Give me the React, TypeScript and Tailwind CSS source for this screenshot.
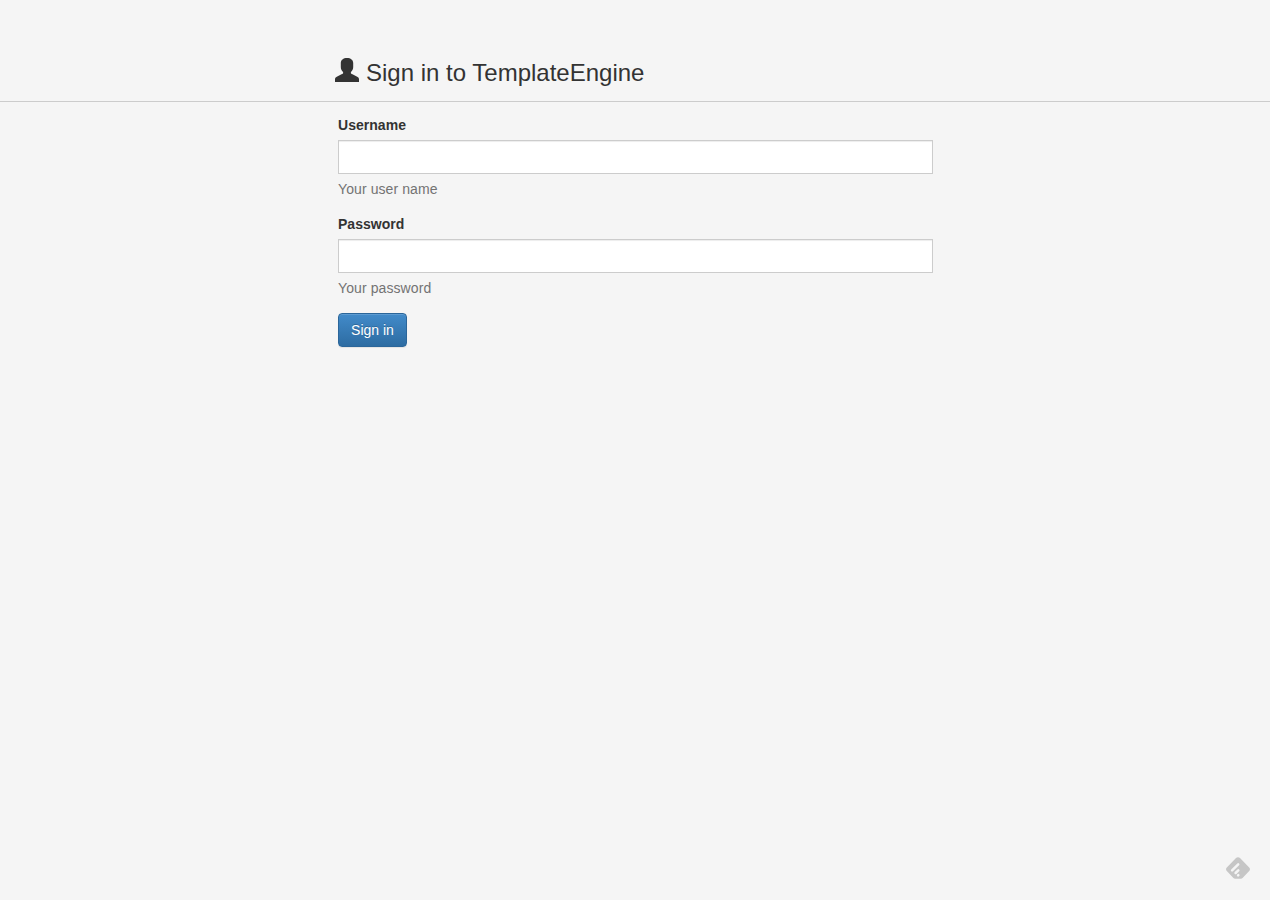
import React from "react";

function UserIcon() {
  return (
    <svg width="24" height="24" viewBox="0 0 24 24" className="mt-[-2px] block shrink-0" fill="currentColor" aria-hidden="true">
      <path d="M12 0C8.300 0 5.800 2 5.800 5v4c0 2 .8 3.800 2.300 5.100v1.100c-.4.500-1 .8-1.600 1.100L1.800 18.800C.6 19.400 0 20.200 0 21.400V24h24v-2.600c0-1.200-.6-2-1.800-2.600l-4.700-2.500c-.6-.3-1.200-.6-1.600-1.100v-1.100c1.500-1.300 2.300-3.100 2.300-5.100V5c0-3-2.500-5-6.200-5z" />
    </svg>
  );
}

function Field({ label, help, type, id }: { label: string; help: string; type: string; id: string }) {
  return (
    <div className="mb-[15px]">
      <label htmlFor={id} className="mb-[5px] block font-bold tracking-[0.03px]">{label}</label>
      <input id={id} type={type} className="block h-[34px] w-full rounded-none border border-[#ccc] bg-white px-3 shadow-[inset_0_1px_1px_rgba(0,0,0,0.075)] outline-none" />
      <p className="mt-[5px] tracking-[0.09px] text-[#737373]">{help}</p>
    </div>
  );
}

export default function App() {
  return (
    <div className="flex h-[900px] flex-col bg-[#f5f5f5] font-['Liberation_Sans',Arial,sans-serif] text-[14px] leading-5 text-[#333]">
      <header className="h-[102px] border-b border-[#ccc] pt-[60px]">
        <div className="ml-[335px] flex">
          <UserIcon />
          <h1 className="ml-[7px] text-[24px] leading-[26px]">Sign in to TemplateEngine</h1>
        </div>
      </header>
      <form className="ml-[338px] w-[595px] pt-[13px]">
        <Field id="username" label="Username" help="Your user name" type="text" />
        <Field id="password" label="Password" help="Your password" type="password" />
        <button type="button" className="h-[34px] w-[69px] rounded-[4px] border border-[#2b669a] bg-linear-to-b from-[#428bca] to-[#2d6ca2] text-white shadow-[inset_0_1px_0_rgba(255,255,255,0.15),0_1px_1px_rgba(0,0,0,0.075)] [text-shadow:0_-1px_0_rgba(0,0,0,0.2)]">Sign in</button>
      </form>
      <footer className="mt-auto mr-5 mb-5 ml-auto">
        <svg width="24" height="23" viewBox="0 0 24 23" className="block" aria-hidden="true">
          <path fill="#c6c6c6" d="M10 1.100.8 10.500c-1 1-1 2.400 0 3.400l6.400 6.900c.6.600 1.200.9 2 .9h5.600c.8 0 1.400-.3 2-.9l6.400-6.900c1-1 1-2.400 0-3.400L14 1.100c-1.200-1.100-2.800-1.100-4 0z" />
          <path d="m6.100 13.400 6.100-6.100M9.600 16l2.700-2.700M12.100 18.400l.2-.2" stroke="#f5f5f5" strokeWidth="2.500" strokeLinecap="round" />
        </svg>
      </footer>
    </div>
  );
}
